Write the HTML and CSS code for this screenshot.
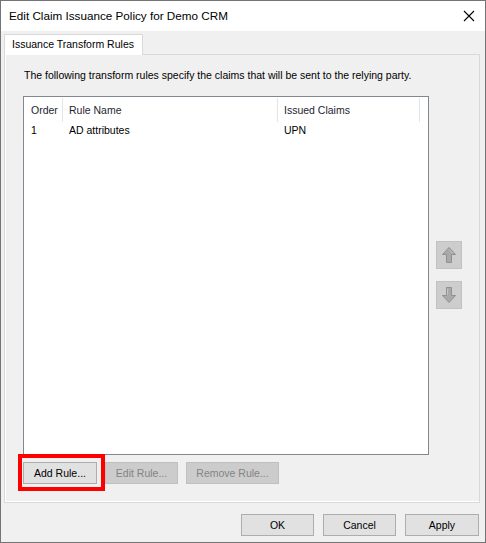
FILE: index.html
```html
<html>
<head>
  <link rel="stylesheet" href="styles.css">
</head>
<body>
<div class="window">
  <div class="titlebar">
    <span class="title">Edit Claim Issuance Policy for Demo CRM</span>
    <svg class="close" width="12" height="12" viewBox="0 0 12 12">
      <path d="M1 1 L11 11 M11 1 L1 11" stroke="#000" stroke-width="1.1" fill="none"/>
    </svg>
  </div>
  <div class="client">
    <div class="tabs">
      <div class="tab">Issuance Transform Rules</div>
    </div>
    <div class="tabpage">
      <p class="description">The following transform rules specify the claims that will be sent to the relying party.</p>
      <div class="rules">
        <div class="listview">
          <div class="lv-row lv-head">
            <div class="cell first">Order</div>
            <div class="cell">Rule Name</div>
            <div class="cell">Issued Claims</div>
          </div>
          <div class="lv-row lv-item">
            <div class="cell first">1</div>
            <div class="cell">AD attributes</div>
            <div class="cell">UPN</div>
          </div>
        </div>
        <div class="movers">
          <div class="mover">
            <svg width="16" height="18" viewBox="0 0 16 18">
              <path d="M8 1.5 L14.5 8.5 L10.5 8.5 L10.5 16.5 L5.5 16.5 L5.5 8.5 L1.5 8.5 Z" fill="#a9a9a9" stroke="#909090" stroke-width="1"/>
              <path d="M8 3.5 L12 7.5" stroke="#c4c4c4" stroke-width="1" fill="none"/>
            </svg>
          </div>
          <div class="mover">
            <svg width="16" height="18" viewBox="0 0 16 18">
              <path d="M8 16.5 L14.5 9.5 L10.5 9.5 L10.5 1.5 L5.5 1.5 L5.5 9.5 L1.5 9.5 Z" fill="#a9a9a9" stroke="#909090" stroke-width="1"/>
              <path d="M6.5 2.5 L6.5 9" stroke="#c4c4c4" stroke-width="1" fill="none"/>
            </svg>
          </div>
        </div>
      </div>
      <div class="rule-buttons">
        <span class="marked">
          <button class="btn add">Add Rule...</button>
          <span class="highlight"></span>
        </span>
        <button class="btn disabled edit">Edit Rule...</button>
        <button class="btn disabled remove">Remove Rule...</button>
      </div>
    </div>
    <div class="footer">
      <button class="btn ok">OK</button>
      <button class="btn cancel">Cancel</button>
      <button class="btn apply">Apply</button>
    </div>
  </div>
</div>
</body>
</html>
```

FILE: styles.css
```css
body {
  margin: 0;
  font-family: "Liberation Sans", Arial, sans-serif;
  font-size: 10.5px;
  color: #000;
}
.window {
  width: 486px;
  height: 543px;
  box-sizing: border-box;
  border: 1px solid #747474;
  display: flex;
  flex-direction: column;
  background: #f0f0f0;
}
.titlebar {
  height: 30px;
  background: #fff;
  display: flex;
  align-items: center;
  justify-content: space-between;
  padding: 0 9px 0 8px;
  flex-shrink: 0;
}
.title {
  font-size: 11.7px;
  padding-bottom: 1px;
}
.close {
  margin-right: 1px;
}
.client {
  flex: 1;
  display: flex;
  flex-direction: column;
  padding: 3px 5px 0 3px;
}
.tabs {
  display: flex;
  height: 21px;
  margin-bottom: -1px;
  position: relative;
  z-index: 1;
}
.tab {
  width: 139px;
  height: 21px;
  box-sizing: border-box;
  background: #fff;
  border: 1px solid #d9d9d9;
  border-bottom: none;
  padding: 3px 0 0 7px;
}
.tabpage {
  height: 449px;
  box-sizing: border-box;
  border: 1px solid #d9d9d9;
  box-shadow: inset 1px 0 #fff, inset 0 -1px #fff;
  padding: 13px 0 0 18px;
}
.description {
  margin: 0;
  padding-left: 1px;
  line-height: 14px;
}
.rules {
  display: flex;
  margin-top: 14px;
}
.listview {
  width: 406px;
  height: 359px;
  box-sizing: border-box;
  border: 1px solid #828790;
  padding-top: 1px;
  background: #fff;
}
.lv-row {
  display: grid;
  grid-template-columns: 39px 215px 142px;
}
.lv-head .cell {
  height: 24px;
  line-height: 24px;
  border-right: 1px solid #e5e5e5;
  color: #1e1e30;
}
.lv-item .cell {
  height: 17px;
  line-height: 17px;
}
.cell {
  box-sizing: border-box;
  padding-left: 6px;
  white-space: nowrap;
}
.cell.first {
  padding-left: 7px;
}
.movers {
  display: flex;
  flex-direction: column;
  gap: 12px;
  padding: 145px 0 0 7px;
}
.mover {
  width: 26px;
  height: 28px;
  box-sizing: border-box;
  background: #cdcdcd;
  border: 1px solid #c2c2c2;
  display: flex;
  align-items: center;
  justify-content: center;
}
.rule-buttons {
  display: flex;
  gap: 8px;
  margin-top: 7px;
}
.btn {
  height: 22px;
  box-sizing: border-box;
  padding: 0;
  background: #e1e1e1;
  border: 1px solid #adadad;
  font-family: "Liberation Sans", Arial, sans-serif;
  font-size: 10.5px;
  color: #000;
}
.btn.disabled {
  background: #cccccc;
  border-color: #bfbfbf;
  color: #838383;
}
.marked {
  position: relative;
  display: flex;
}
.highlight {
  position: absolute;
  top: -8px;
  left: -5px;
  width: 87px;
  height: 37px;
  box-sizing: border-box;
  border: 4px solid #ff0000;
}
.add { width: 74px; }
.edit { width: 73px; }
.remove { width: 93px; }
.footer {
  display: flex;
  justify-content: flex-end;
  gap: 9px;
  margin-top: 11px;
  padding-right: 1px;
}
.ok, .cancel { width: 73px; }
.apply { width: 74px; }
```
